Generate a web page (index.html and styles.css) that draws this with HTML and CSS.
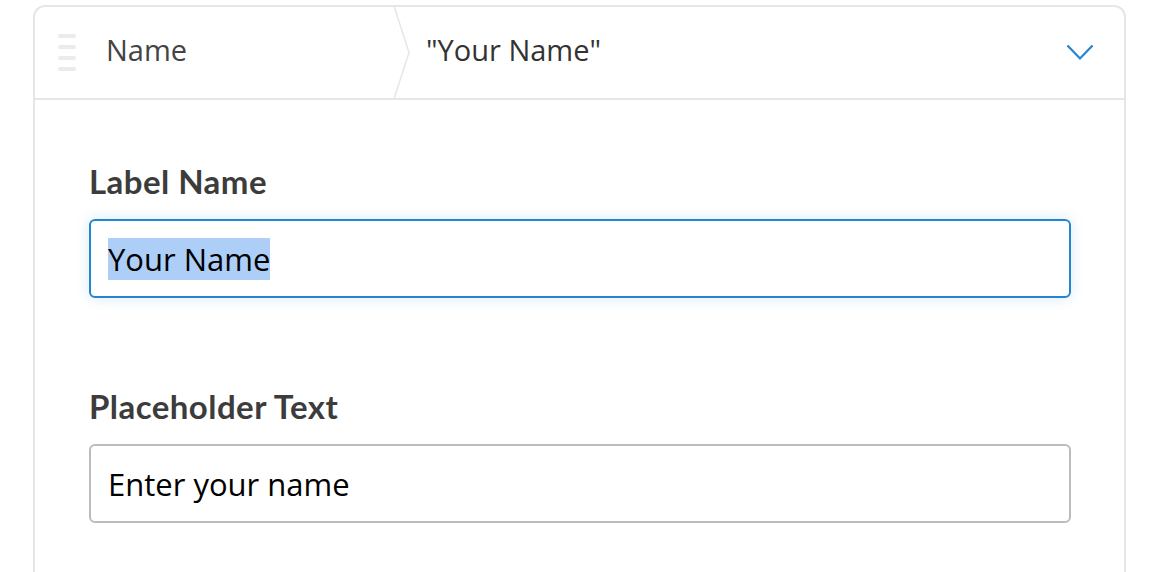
FILE: index.html
```html
<!DOCTYPE html>
<html>
<head>
<meta charset="utf-8">
<link rel="stylesheet" href="styles.css">
</head>
<body>
<div class="card">
  <div class="card-header">
    <div class="handle">
      <span class="bar"></span><span class="bar"></span><span class="bar"></span><span class="bar"></span>
    </div>
    <div class="field-type">Name</div>
    <svg class="sep" width="18" height="93" viewBox="0 0 18 93"><path d="M1 0 L16 46.5 L1 93" fill="none" stroke="#e6e6e6" stroke-width="1.5"/></svg>
    <div class="field-value">"Your Name"</div>
    <svg class="chevron" width="28" height="17" viewBox="0 0 28 17"><path d="M1.5 1.5 L14 14.5 L26.5 1.5" fill="none" stroke="#2185d0" stroke-width="2.2"/></svg>
  </div>
  <div class="card-body">
    <div class="field">
      <label class="label">Label Name</label>
      <div class="input focused"><span class="sel">Your Name</span></div>
    </div>
    <div class="field">
      <label class="label">Placeholder Text</label>
      <div class="input">Enter your name</div>
    </div>
  </div>
</div>
</body>
</html>
```

FILE: styles.css
```css
html, body {
  margin: 0;
  padding: 0;
  background: #ffffff;
  height: 100%;
  overflow: hidden;
}

.card {
  box-sizing: border-box;
  margin: 5px 0 0 33px;
  width: 1093px;
  height: 600px;
  border: 2px solid #e6e6e6;
  border-bottom: none;
  border-radius: 12px 12px 0 0;
  background: #ffffff;
  font-family: "Open Sans", sans-serif;
}

.card-header {
  display: flex;
  align-items: center;
  height: 91px;
  border-bottom: 2px solid #e6e6e6;
}

.handle {
  display: flex;
  flex-direction: column;
  gap: 7px;
  margin-left: 23px;
  width: 18px;
}

.bar {
  display: block;
  height: 4px;
  border-radius: 2px;
  background: #ebebeb;
}

.field-type {
  margin-left: 30px;
  margin-bottom: 6px;
  width: 287px;
  font-size: 29px;
  color: #444444;
}

.sep {
  display: block;
  align-self: stretch;
  height: 93px;
  margin-top: -1px;
}

.field-value {
  flex: 1;
  margin-left: 15px;
  margin-bottom: 6px;
  font-size: 29px;
  color: #333333;
}

.chevron {
  display: block;
  margin-right: 30px;
}

.card-body {
  padding: 62px 53px 0 54px;
  display: flex;
  flex-direction: column;
  gap: 89px;
}

.field {
  display: flex;
  flex-direction: column;
  gap: 19px;
}

.label {
  font-family: "Lato", sans-serif;
  font-weight: 700;
  font-size: 33px;
  line-height: 38px;
  letter-spacing: 0.45px;
  color: #3c3c3c;
}

.input {
  box-sizing: border-box;
  height: 79px;
  border: 2px solid #bcbcbc;
  border-radius: 6px;
  padding: 0 17px;
  display: flex;
  align-items: center;
  font-family: "Open Sans", sans-serif;
  font-size: 31px;
  color: #000000;
}

.input.focused {
  border-color: #2185d0;
  box-shadow: 0 0 14px rgba(33, 133, 208, 0.18);
}

.sel {
  background: #accef7;
  line-height: 42px;
}
```
